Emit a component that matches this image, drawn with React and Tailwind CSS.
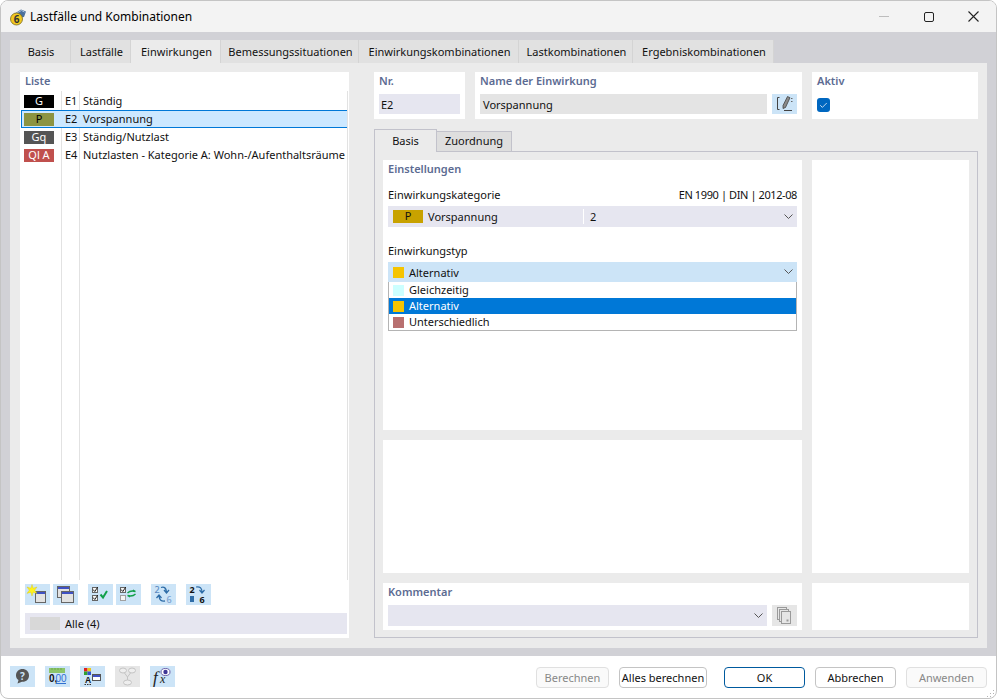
import { Check } from 'lucide-react'

const actions = [
  { badge: 'G', id: 'E1', name: 'Ständig', color: 'bg-black text-white' },
  { badge: 'P', id: 'E2', name: 'Vorspannung', color: 'bg-[#8c9442] text-black', selected: true },
  { badge: 'Gq', id: 'E3', name: 'Ständig/Nutzlast', color: 'bg-[#555555] text-white' },
  { badge: 'Ql A', id: 'E4', name: 'Nutzlasten - Kategorie A: Wohn-/Aufenthaltsräume', color: 'bg-[#c0504d] text-white' },
]

const tabs = [
  { label: 'Basis', w: 'w-[61px]' },
  { label: 'Lastfälle', w: 'w-[60px]' },
  { label: 'Einwirkungen', w: 'w-[90px]', active: true },
  { label: 'Bemessungssituationen', w: 'w-[138px]' },
  { label: 'Einwirkungskombinationen', w: 'w-[160px]' },
  { label: 'Lastkombinationen', w: 'w-[114px]' },
  { label: 'Ergebniskombinationen', w: 'w-[141px]' },
]

const types = [
  { label: 'Gleichzeitig', color: 'bg-[#ccffff]' },
  { label: 'Alternativ', color: 'bg-[#f5c400]', selected: true },
  { label: 'Unterschiedlich', color: 'bg-[#b87070]' },
]

function Chevron() {
  return (
    <svg width="9" height="6" viewBox="0 0 9 6" className="shrink-0">
      <path d="M0.5 0.5 L4.5 4.5 L8.5 0.5" fill="none" stroke="#555" strokeWidth="1" />
    </svg>
  )
}

function Win({ x, y, w = 12, h = 11 }) {
  return (
    <g>
      <rect x={x + 0.5} y={y + 0.5} width={w} height={h} fill="#e2e2e2" stroke="#666" strokeWidth="1" />
      <rect x={x + 1} y={y + 1} width={w - 1} height="2" fill="#3f51c4" />
    </g>
  )
}

function IconBtn({ children, disabled, className = '' }) {
  return (
    <div className={`w-[25px] h-[21px] shrink-0 ${disabled ? 'bg-[#e6e6e6]' : 'bg-[#cce4f7]'} ${className}`}>
      <svg width="25" height="21" viewBox="0 0 25 21">{children}</svg>
    </div>
  )
}

function Box({ x, y, checked }) {
  return (
    <g>
      <rect x={x + 0.5} y={y + 0.5} width="5" height="5" fill="#f4f4f4" stroke={checked ? '#666' : '#a0a0a0'} />
      {checked && <path d={`M${x + 1} ${y + 2.5} l1.8 2 l3 -4.5`} fill="none" stroke="#222" strokeWidth="1" />}
    </g>
  )
}

function Section({ title, className = '', children }) {
  return (
    <div className={`bg-white px-[5px] ${className}`}>
      <div className="h-[22px] pt-[1px] text-[11px] font-semibold text-[#5c6b92]">{title}</div>
      {children}
    </div>
  )
}

export default function App() {
  return (
    <div className="w-[997px] h-[699px] flex flex-col bg-white rounded-lg overflow-hidden border border-[#c4c4c4] text-[11px] text-[#111] font-['Noto_Sans',sans-serif]">
      <div className="h-[31px] shrink-0 bg-[#f3f3f3] flex items-center pl-[9px] -mx-px">
        <svg width="18" height="18" viewBox="0 0 18 18">
          <path d="M5 6 L12 1.5 L17 3.5 L15 9 L9 10 Z" fill="#4a6f9c" />
          <path d="M7 5.5 L12.5 2.5 L15.5 4" fill="none" stroke="#a8c0dc" strokeWidth="1" />
          <circle cx="7.5" cy="11" r="6" fill="#f2c81e" stroke="#7a6a20" strokeWidth="0.8" />
          <text x="7.5" y="14.5" textAnchor="middle" fontSize="10" fontWeight="700" fill="#333">6</text>
        </svg>
        <span className="ml-[3px] mt-px text-[12px] text-black">Lastfälle und Kombinationen</span>
        <div className="ml-auto mr-px flex items-center">
          <div className="w-[45px] flex justify-center"><div className="w-[10px] h-px bg-[#bdbdbd]" /></div>
          <div className="w-[45px] flex justify-center"><div className="w-[10px] h-[10px] rounded-[2px] border border-[#222]" /></div>
          <div className="w-[45px] flex justify-center">
            <svg width="11" height="11" viewBox="0 0 11 11"><path d="M0.5 0.5 L10.5 10.5 M10.5 0.5 L0.5 10.5" stroke="#222" strokeWidth="1.1" /></svg>
          </div>
        </div>
      </div>

      <div className="flex-1 bg-[#d1d1d6] -mx-px px-[10px] pt-2 pb-2 flex flex-col min-h-0">
        <div className="h-[23px] shrink-0 flex">
          {tabs.map(t => (
            <div key={t.label} className={`${t.w} flex items-center justify-center pl-[2px] pt-[2px] border-r border-[#d4d4d4] ${t.active ? 'bg-[#ebebeb]' : 'bg-[#e1e1e1]'}`}>{t.label}</div>
          ))}
        </div>

        <div className="flex-1 bg-[#ebebeb] pl-[10px] pr-[9px] pt-[9px] pb-[10px] flex gap-[25px] min-h-0">
          <div className="w-[329px] shrink-0 bg-white flex flex-col">
            <div className="h-[19px] pl-[5px] pt-[1px] text-[11px] font-semibold text-[#5c6b92]">Liste</div>
            <div className="relative h-[489px] shrink-0 flex flex-col">
              <div className="absolute top-0 bottom-0 left-[41px] w-px bg-[#e2e2e2]" />
              <div className="absolute top-0 bottom-0 left-[59px] w-px bg-[#e2e2e2]" />
              <div className="absolute top-0 bottom-0 left-[327px] w-px bg-[#e2e2e2]" />
              <div className="h-px" />
              {actions.map(a => (
                <div key={a.id} className={`relative h-[18px] ml-px w-[326px] flex items-center ${a.selected ? 'bg-[#cce8ff] border border-r-0 border-[#0078d7]' : ''}`}>
                  <div className={`${a.selected ? 'ml-[2px]' : 'ml-[3px]'} w-[30px] h-[13px] flex items-center justify-center ${a.color}`}>{a.badge}</div>
                  <div className="ml-[11px] w-[18px]">{a.id}</div>
                  <div className="whitespace-nowrap">{a.name}</div>
                </div>
              ))}
            </div>
            <div className="flex pl-[5px] pt-[4px] h-[33px] shrink-0">
              <IconBtn>
                <Win x={10} y={7} w={10} />
                <path d="M7 0.5 L8.2 4.2 L12 3 L9.7 6.2 L12 9.4 L8.2 8.2 L7 12 L5.8 8.2 L2 9.4 L4.3 6.2 L2 3 L5.8 4.2 Z" fill="#fff21c" stroke="#d8c810" strokeWidth="0.4" />
              </IconBtn>
              <IconBtn className="ml-[3px]">
                <Win x={4} y={2} />
                <Win x={8} y={7} />
              </IconBtn>
              <IconBtn className="ml-[10px]">
                <Box x={4} y={3} checked />
                <Box x={4} y={11} checked />
                <path d="M12.5 10.5 L15 13.5 L19 7" fill="none" stroke="#12a04a" strokeWidth="2" />
              </IconBtn>
              <IconBtn className="ml-[3px]">
                <Box x={4} y={3} checked />
                <Box x={4} y={11} />
                <path d="M11.5 9 Q14.5 6 19.5 7.5 M19.5 7.5 l-2.5 -1.5 M19.5 10 Q16.5 13 11.5 11.5 M11.5 11.5 l2.5 1.5" fill="none" stroke="#12a04a" strokeWidth="1.4" />
              </IconBtn>
              <IconBtn className="ml-[10px]">
                <text x="3.5" y="9" fontSize="9" fontWeight="500" fill="#5b8ac0">2</text>
                <text x="15.5" y="18.5" fontSize="9" fontWeight="500" fill="#7aa2d0">6</text>
                <path d="M10 3.5 Q15 2 15.5 8 M13 6 L15.5 9 L18 6 M14 17 Q8.5 18 8 12 M5.5 14 L8 11 L10.5 14" fill="none" stroke="#2f6da8" strokeWidth="1.3" />
              </IconBtn>
              <IconBtn className="ml-[10px]">
                <text x="3.5" y="9" fontSize="9" fontWeight="700" fill="#111">2</text>
                <text x="13.5" y="18.5" fontSize="9" fontWeight="700" fill="#111">6</text>
                <rect x="4" y="12" width="4" height="6" fill="#2f6da8" />
                <path d="M10 3 Q16 2 16 8 M13.5 6 L16 9 L18.5 6" fill="none" stroke="#2f6da8" strokeWidth="1.2" />
              </IconBtn>
            </div>
            <div className="mx-[5px] mr-[2px] h-[21px] bg-[#e6e6f0] flex items-center pl-[5px]">
              <div className="w-[30px] h-[13px] bg-[#d8d8d8]" />
              <span className="ml-[5px] pt-[2px]">Alle (4)</span>
            </div>
          </div>

          <div className="flex-1 flex flex-col min-w-0">
            <div className="flex gap-[10px] h-[47px] shrink-0">
              <Section title="Nr." className="w-[91px]">
                <div className="h-[20px] bg-[#e6e6f0] flex items-center px-[2px] pt-[2px]">E2</div>
              </Section>
              <Section title="Name der Einwirkung" className="w-[327px]">
                <div className="flex gap-[5px]">
                  <div className="flex-1 h-[20px] bg-[#e4e4e4] flex items-center px-[3px] pt-[2px]">Vorspannung</div>
                  <div className="w-[25px] h-[20px] bg-[#cce4f7]">
                    <svg width="25" height="20" viewBox="0 0 25 20">
                      <path d="M7.5 3.5 H5.5 V15.5 H7.5 M12 16.5 H20" fill="none" stroke="#444" strokeWidth="1" />
                      <path d="M15.5 2.5 L18 3.7 L13.5 13.5 L11 14.5 L11 11.5 Z" fill="#8a8a8a" stroke="#333" strokeWidth="0.7" />
                      <path d="M19 4.5 H20.5 M19 7.5 H20.5" stroke="#666" />
                    </svg>
                  </div>
                </div>
              </Section>
              <Section title="Aktiv" className="flex-1">
                <div className="mt-[4px] w-[13px] h-[14px] rounded-[3px] bg-[#0067c0] flex items-center justify-center">
                  <Check size={9} strokeWidth={2} className="text-white" />
                </div>
              </Section>
            </div>

            <div className="mt-[10px] h-[22px] shrink-0 flex items-end">
              <div className="relative z-10 w-[63px] h-[23px] -mb-px bg-[#ebebeb] border border-b-0 border-[#c2c2cb] flex items-center justify-center text-[11px]">Basis</div>
              <div className="w-[75px] h-[20px] bg-[#dedede] border border-l-0 border-b-0 border-[#c2c2cb] flex items-center justify-center">Zuordnung</div>
            </div>

            <div className="flex-1 border border-[#c2c2cb] pl-2 pr-2 pt-2 pb-2 grid grid-cols-[419px_157px] grid-rows-[270px_133px_47px] gap-[10px] min-h-0">
              <Section title="Einstellungen" className="relative">
                <div className="flex justify-between pt-[5px] h-[24px]">
                  <span>Einwirkungskategorie</span>
                  <span className="tracking-[-0.4px]">EN 1990 | DIN | 2012-08</span>
                </div>
                <div className="h-[21px] bg-[#e6e6f0] flex items-center pl-[5px] pr-[4px]">
                  <div className="w-[30px] h-[13px] bg-[#c8a200] flex items-center justify-center">P</div>
                  <span className="ml-[5px] w-[155px] pt-[2px]">Vorspannung</span>
                  <div className="w-px h-[15px] bg-white" />
                  <span className="ml-[6px] flex-1 pt-[2px]">2</span>
                  <Chevron />
                </div>
                <div className="h-[35px] flex items-end pb-[3px]">Einwirkungstyp</div>
                <div className="h-[20px] bg-[#cce4f7] flex items-center pl-[5px] pr-[4px]">
                  <div className="w-[11px] h-[11px] bg-[#f5c400]" />
                  <span className="ml-[5px] flex-1 pt-[2px]">Alternativ</span>
                  <Chevron />
                </div>
                <div className="absolute left-[5px] right-[5px] top-[122px] h-[49px] bg-white border-x border-b border-[#b4b4b4] flex flex-col">
                  {types.map(t => (
                    <div key={t.label} className={`h-4 flex items-center pl-1 ${t.selected ? 'bg-[#0078d7] text-white' : ''}`}>
                      <div className={`w-[11px] h-[11px] ${t.color}`} />
                      <span className="ml-[5px]">{t.label}</span>
                    </div>
                  ))}
                </div>
              </Section>
              <div className="bg-white row-span-2" />
              <div className="bg-white" />
              <Section title="Kommentar">
                <div className="flex gap-[5px]">
                  <div className="flex-1 h-[21px] bg-[#e6e6f0] flex items-center justify-end pr-[4px]">
                    <Chevron />
                  </div>
                  <div className="w-[25px] h-[21px] bg-[#e6e6e6]">
                    <svg width="25" height="21" viewBox="0 0 25 21" fill="#e6e6e6" stroke="#9a9a9a">
                      <rect x="5.5" y="2.5" width="9" height="12" />
                      <rect x="7.5" y="4.5" width="9" height="12" />
                      <rect x="9.5" y="6.5" width="9" height="12" />
                      <rect x="14.5" y="14.5" width="2" height="2" fill="#9a9a9a" stroke="none" />
                    </svg>
                  </div>
                </div>
              </Section>
              <div className="bg-white" />
            </div>
          </div>
        </div>
      </div>

      <div className="relative h-[42px] shrink-0 flex items-center pl-[9px] pr-[9px] pt-[1px]">
        <div className="flex gap-[10px] -mt-[2px]">
          <IconBtn>
            <path d="M12.5 3 C9 3 6 5.5 6 9.5 C6 11.5 7 13 8.5 14 L7.5 17.5 L12 15.8 C16.5 16 19 13 19 9.5 C19 5.5 16 3 12.5 3 Z" fill="#555" />
            <text x="12.5" y="13.5" textAnchor="middle" fontSize="10" fontWeight="700" fill="#cce4f7">?</text>
          </IconBtn>
          <IconBtn>
            <rect x="4" y="2" width="16" height="5" fill="#8cc56a" />
            <path d="M7 2 V4 M10 2 V4 M13 2 V4 M16 2 V4" stroke="#5f9c45" strokeWidth="0.7" />
            <text x="4" y="16" fontSize="10" fontWeight="700" fontFamily="Liberation Sans" fill="#111">0,</text>
            <text x="10.5" y="16" fontSize="10" fontFamily="Liberation Sans" fill="#2f6fd0">00</text>
            <path d="M11 17.5 H21" stroke="#2f6fd0" />
          </IconBtn>
          <IconBtn>
            <rect x="4" y="2" width="3.5" height="3.5" fill="#e02020" />
            <rect x="7.5" y="2" width="3.5" height="3.5" fill="#e8c820" />
            <rect x="4" y="5.5" width="3.5" height="3.5" fill="#30a030" />
            <rect x="7.5" y="5.5" width="3.5" height="3.5" fill="#3050d0" />
            <text x="5" y="16.5" fontSize="8.5" fontWeight="700" fontFamily="Liberation Sans" fill="#111">A</text>
            <path d="M4.5 18.5 H6 M7 18.5 H8.5 M9.5 18.5 H11" stroke="#333" />
            <rect x="12.5" y="8.5" width="8" height="6" fill="#fff" stroke="#555" />
            <rect x="13" y="9" width="7" height="2" fill="#3f51c4" />
          </IconBtn>
          <IconBtn disabled>
            <g fill="#eee" stroke="#c4c4c4">
              <ellipse cx="8" cy="4.5" rx="3.5" ry="2.5" />
              <ellipse cx="17" cy="4.5" rx="3.5" ry="2.5" />
              <ellipse cx="12.5" cy="16.5" rx="4" ry="2.5" />
              <path d="M9.5 7 L12.5 11 L15.5 7 M12.5 11 V14" fill="none" />
            </g>
          </IconBtn>
          <IconBtn>
            <text x="3" y="17" fontSize="17" fontStyle="italic" fontFamily="Liberation Serif" fill="#222">f</text>
            <text x="10" y="17" fontSize="12" fontStyle="italic" fontFamily="Liberation Serif" fill="#222">x</text>
            <ellipse cx="15.5" cy="6" rx="4.5" ry="3.5" fill="#fff" stroke="#6a5fa8" />
            <circle cx="15.5" cy="6" r="2.2" fill="#3f3596" />
          </IconBtn>
        </div>
        <div className="ml-auto flex text-[#111]">
          <button className="w-[73px] h-[21px] pt-[2px] rounded-[4px] border border-[#e0e0e0] bg-[#fafafa] text-[#888]">Berechnen</button>
          <button className="ml-[10px] w-[88px] h-[21px] pt-[2px] rounded-[4px] border border-[#c4c4c4] bg-white">Alles berechnen</button>
          <button className="ml-[17px] w-[81px] h-[21px] pt-[2px] rounded-[4px] border border-[#005a9e] bg-white">OK</button>
          <button className="ml-[10px] w-[81px] h-[21px] pt-[2px] rounded-[4px] border border-[#c4c4c4] bg-white">Abbrechen</button>
          <button className="ml-[10px] w-[81px] h-[21px] pt-[2px] rounded-[4px] border border-[#e0e0e0] bg-[#fafafa] text-[#888]">Anwenden</button>
        </div>
        <svg className="absolute right-0 bottom-0" width="9" height="9" viewBox="0 0 9 9" fill="#b4b4b4">
          <rect x="6" y="1" width="1" height="1" /><rect x="3" y="4" width="1" height="1" /><rect x="6" y="4" width="1" height="1" />
          <rect x="0" y="7" width="1" height="1" /><rect x="3" y="7" width="1" height="1" /><rect x="6" y="7" width="1" height="1" />
        </svg>
      </div>
    </div>
  )
}
